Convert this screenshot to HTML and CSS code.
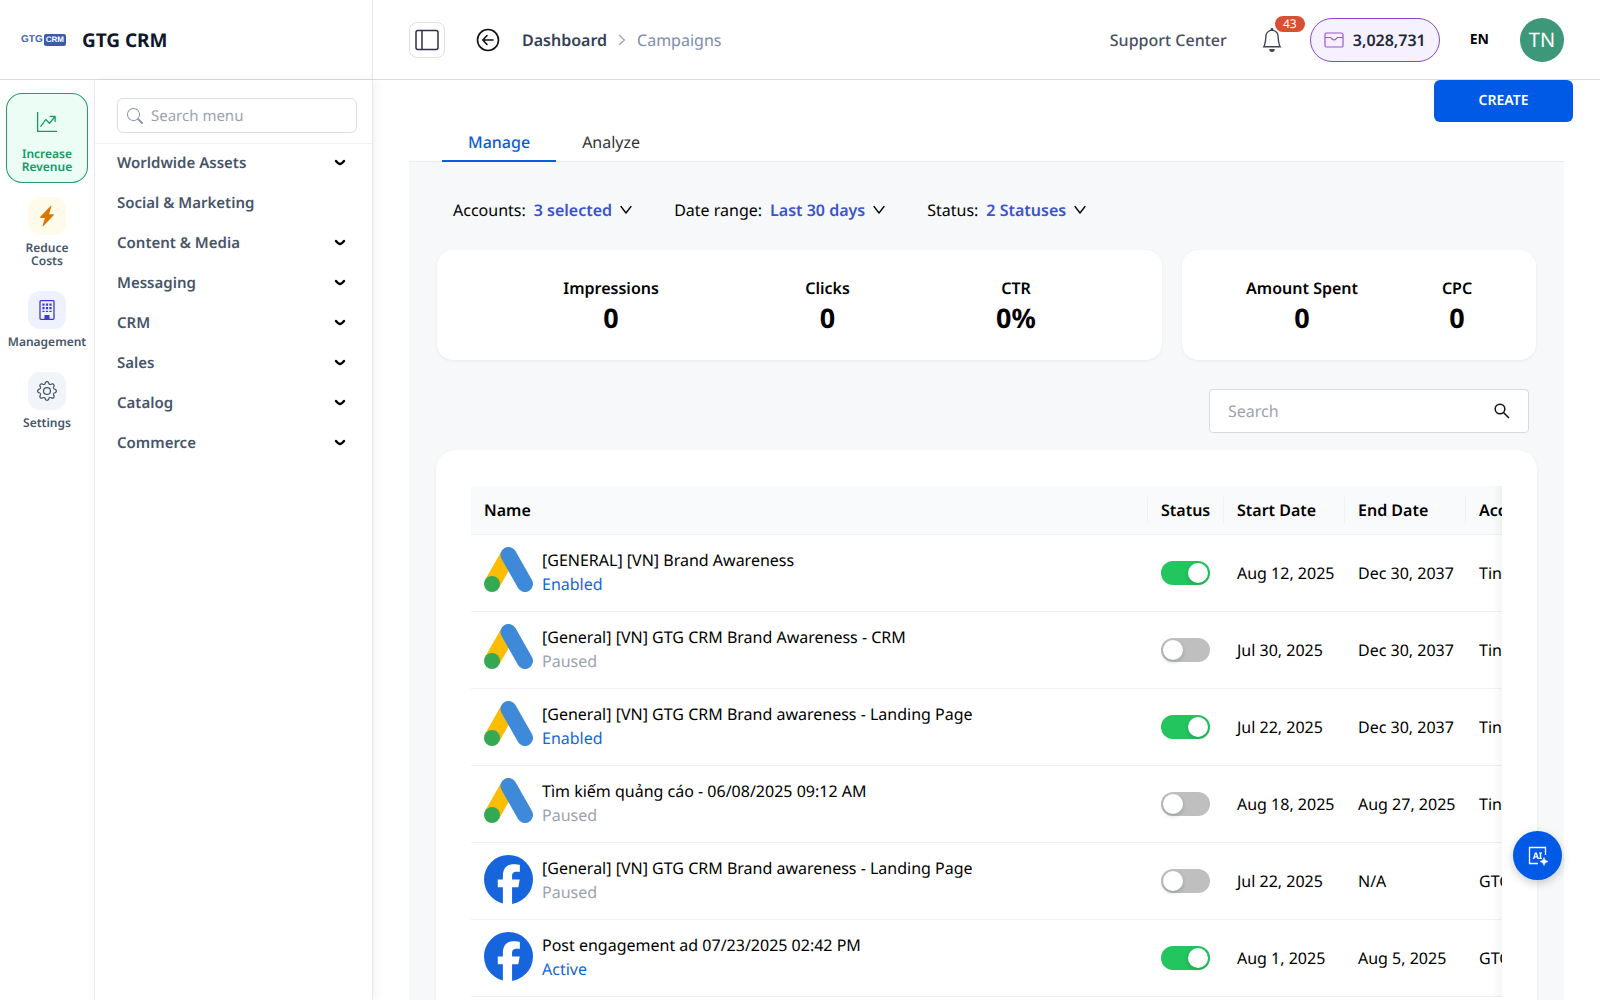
FILE: index.html
```html
<!DOCTYPE html>
<html lang="en">
<head>
	<meta charset="UTF-8">
	<meta name="viewport" content="width=device-width, initial-scale=1">
	<title>Campaigns - GTG CRM</title>
	<link rel="stylesheet" href="styles.css">
</head>
<body>

<!-- shared icons -->
<svg class="sprite" aria-hidden="true">
	<symbol id="chevron" viewBox="0 0 12 12"><path d="M1 2.5 6 9l5-6.500" fill="none" stroke="currentColor" stroke-width="1.3" stroke-linecap="round" stroke-linejoin="round"/></symbol>
	<symbol id="caret" viewBox="0 0 12 8"><path d="M2 2q2.500 3 4 3t4-3" fill="none" stroke="currentColor" stroke-width="2.400" stroke-linecap="round"/></symbol>
	<symbol id="ads" viewBox="0 0 49 45">
		<path d="M24.500 8 8 37" stroke="#fbbc04" stroke-width="16"/>
		<path d="M24.500 8 41 37" stroke="#3f8ad8" stroke-width="16" stroke-linecap="round"/>
		<circle cx="8" cy="37" r="8" fill="#34a853"/>
	</symbol>
	<symbol id="facebook" viewBox="0 0 48 48">
		<circle cx="24" cy="24" r="24" fill="#1765dc"/>
		<path d="M18.500 48V31.500h-5V24h5v-3.200C18.500 13 22 9 29.800 9c1.500 0 4 .3 5.300.6v7c-.6-.1-1.800-.1-3-.1-3.600 0-4.600 1.500-4.600 4.800V24H35l-1.400 7.500h-6.100V48z" fill="#fff"/>
	</symbol>
</svg>

<div class="app">
	<header class="topbar">
		<div class="brand">
			<span class="logo" aria-hidden="true">GTG<b>CRM</b></span>
			<span class="brand-name">GTG CRM</span>
		</div>
		<div class="topbar-main">
			<button type="button" class="toggle" aria-label="Toggle sidebar">
				<svg width="24" height="22" viewBox="0 0 24 22" fill="none" stroke="#312e45" stroke-width="1.500"><rect x="1" y="1.500" width="22" height="19" rx="2"/><path d="M7 2v18"/></svg>
			</button>
			<button type="button" class="back" aria-label="Back">
				<svg width="24" height="24" viewBox="0 0 24 24" fill="none" stroke="#111" stroke-width="1.600" stroke-linecap="round" stroke-linejoin="round"><circle cx="12" cy="12" r="10.500"/><path d="M17 12H7m4-4.500L6.800 12l4.200 4.500"/></svg>
			</button>
			<nav class="crumbs" aria-label="Breadcrumb">
				<a href="#">Dashboard</a>
				<svg width="8" height="14" viewBox="0 0 8 14" fill="none" stroke="#94a3b8" stroke-width="1.200"><path d="m1 2 5.500 5L1 12"/></svg>
				<span>Campaigns</span>
			</nav>
			<a href="#" class="support">Support Center</a>
			<button type="button" class="bell" aria-label="Notifications">
				<svg width="22" height="24" viewBox="0 0 16 16" preserveAspectRatio="none" fill="#3f4652"><path d="M8 16a2 2 0 0 0 2-2H6a2 2 0 0 0 2 2M8 1.918l-.797.161A4 4 0 0 0 4 6c0 .628-.134 2.197-.459 3.742-.16.767-.376 1.566-.663 2.258h10.244c-.287-.692-.502-1.490-.663-2.258C12.134 8.197 12 6.628 12 6a4 4 0 0 0-3.203-3.920zM14.220 12c.223.447.481.801.780 1H1c.299-.199.557-.553.780-1C2.680 10.200 3 6.880 3 6c0-2.420 1.720-4.440 4.005-4.901a1 1 0 1 1 1.990 0A5 5 0 0 1 13 6c0 .880.320 4.200 1.220 6"/></svg>
				<span class="badge">43</span>
			</button>
			<button type="button" class="credits">
				<svg width="20" height="16" viewBox="0 0 20 16" fill="none" stroke="#9a55e0" stroke-width="1.200"><rect x="1" y="1" width="18" height="14" rx="1.500"/><path d="M1 5.500h5.500c.8 0 1.500 2.500 3.500 2.500s2.700-2.500 3.500-2.500H19"/></svg>
				3,028,731
			</button>
			<button type="button" class="lang">EN</button>
			<span class="avatar">TN</span>
		</div>
	</header>

	<div class="body">
		<nav class="rail" aria-label="Sections">
			<a href="#" class="rail-item active">
				<span class="rail-icon"><svg width="20" height="20" viewBox="0 0 16 16" fill="currentColor"><path d="M0 0h1v15h15v1H0zm10 3.500a.5.5 0 0 1 .5-.5h4a.5.5 0 0 1 .5.5v4a.5.5 0 0 1-1 0V4.900l-3.613 4.417a.5.5 0 0 1-.74.037L7.060 6.767l-3.656 5.027a.5.5 0 0 1-.808-.588l4-5.500a.5.5 0 0 1 .758-.060l2.609 2.610L13.445 4H10.500a.5.5 0 0 1-.5-.5"/></svg></span>
				<span>Increase<br>Revenue</span>
			</a>
			<a href="#" class="rail-item">
				<span class="rail-icon costs"><svg width="20" height="20" viewBox="0 0 16 16" fill="currentColor"><path d="M11.251.068a.5.5 0 0 1 .227.580L9.677 6.500H13a.5.5 0 0 1 .364.843l-8 8.500a.5.5 0 0 1-.842-.490L6.323 9.500H3a.5.5 0 0 1-.364-.843l8-8.500a.5.5 0 0 1 .615-.090z"/></svg></span>
				<span>Reduce<br>Costs</span>
			</a>
			<a href="#" class="rail-item">
				<span class="rail-icon management"><svg width="20" height="20" viewBox="0 0 20 20"><rect x="3" y=".7" width="14" height="18.600" rx="1" fill="none" stroke="currentColor" stroke-width="1.300"/><path d="M6.500 3.500v8.500M10 3.500v8.500M13.500 3.500v8.500" stroke="currentColor" stroke-width="2.200" stroke-dasharray="2.200 1.400"/><path d="M7.500 15h5v4h-5z" fill="currentColor"/></svg></span>
				<span>Management</span>
			</a>
			<a href="#" class="rail-item">
				<span class="rail-icon settings"><svg width="20" height="20" viewBox="0 0 16 16" fill="currentColor"><path d="M8 4.754a3.246 3.246 0 1 0 0 6.492 3.246 3.246 0 0 0 0-6.492M5.754 8a2.246 2.246 0 1 1 4.492 0 2.246 2.246 0 0 1-4.492 0"/><path d="M9.796 1.343c-.527-1.790-3.065-1.790-3.592 0l-.094.319a.873.873 0 0 1-1.255.520l-.292-.160c-1.640-.892-3.433.902-2.540 2.541l.159.292a.873.873 0 0 1-.520 1.255l-.319.094c-1.790.527-1.790 3.065 0 3.592l.319.094a.873.873 0 0 1 .520 1.255l-.160.292c-.892 1.640.901 3.434 2.541 2.540l.292-.159a.873.873 0 0 1 1.255.520l.094.319c.527 1.790 3.065 1.790 3.592 0l.094-.319a.873.873 0 0 1 1.255-.520l.292.160c1.640.893 3.434-.902 2.540-2.541l-.159-.292a.873.873 0 0 1 .520-1.255l.319-.094c1.790-.527 1.790-3.065 0-3.592l-.319-.094a.873.873 0 0 1-.520-1.255l.160-.292c.893-1.640-.902-3.433-2.541-2.540l-.292.159a.873.873 0 0 1-1.255-.520zm-2.633.283c.246-.835 1.428-.835 1.674 0l.094.319a1.873 1.873 0 0 0 2.693 1.115l.291-.160c.764-.415 1.600.420 1.184 1.185l-.159.292a1.873 1.873 0 0 0 1.116 2.692l.318.094c.835.246.835 1.428 0 1.674l-.319.094a1.873 1.873 0 0 0-1.115 2.693l.160.291c.415.764-.420 1.600-1.185 1.184l-.291-.159a1.873 1.873 0 0 0-2.693 1.116l-.094.318c-.246.835-1.428.835-1.674 0l-.094-.319a1.873 1.873 0 0 0-2.692-1.115l-.292.160c-.764.415-1.600-.420-1.184-1.185l.159-.291A1.873 1.873 0 0 0 1.945 8.930l-.319-.094c-.835-.246-.835-1.428 0-1.674l.319-.094A1.873 1.873 0 0 0 3.060 4.377l-.160-.292c-.415-.764.420-1.600 1.185-1.184l.292.159a1.873 1.873 0 0 0 2.692-1.115z"/></svg></span>
				<span>Settings</span>
			</a>
		</nav>

		<aside class="menu">
			<div class="menu-search">
				<label class="menu-field">
					<svg width="16" height="16" viewBox="0 0 16 16" fill="#8f96a3"><path d="M11.742 10.344a6.500 6.500 0 1 0-1.397 1.398h-.001q.044.060.098.115l3.850 3.850a1 1 0 0 0 1.415-1.414l-3.850-3.850a1 1 0 0 0-.115-.1zM12 6.500a5.500 5.500 0 1 1-11 0 5.500 5.500 0 0 1 11 0"/></svg>
					<input type="text" placeholder="Search menu" aria-label="Search menu">
				</label>
			</div>
			<ul class="menu-list">
				<li><a href="#">Worldwide Assets <svg width="12" height="8"><use href="#caret"/></svg></a></li>
				<li><a href="#">Social &amp; Marketing</a></li>
				<li><a href="#">Content &amp; Media <svg width="12" height="8"><use href="#caret"/></svg></a></li>
				<li><a href="#">Messaging <svg width="12" height="8"><use href="#caret"/></svg></a></li>
				<li><a href="#">CRM <svg width="12" height="8"><use href="#caret"/></svg></a></li>
				<li><a href="#">Sales <svg width="12" height="8"><use href="#caret"/></svg></a></li>
				<li><a href="#">Catalog <svg width="12" height="8"><use href="#caret"/></svg></a></li>
				<li><a href="#">Commerce <svg width="12" height="8"><use href="#caret"/></svg></a></li>
			</ul>
		</aside>

		<main class="main">
			<div class="actions">
				<button type="button" class="create">CREATE</button>
			</div>
			<div class="tabs" role="tablist">
				<button type="button" class="tab active" role="tab" aria-selected="true">Manage</button>
				<button type="button" class="tab" role="tab" aria-selected="false">Analyze</button>
			</div>

			<section class="panel">
				<div class="filters">
					<button type="button" class="filter">Accounts: <b>3 selected</b> <svg width="12" height="12"><use href="#chevron"/></svg></button>
					<button type="button" class="filter">Date range: <b>Last 30 days</b> <svg width="12" height="12"><use href="#chevron"/></svg></button>
					<button type="button" class="filter">Status: <b>2 Statuses</b> <svg width="12" height="12"><use href="#chevron"/></svg></button>
				</div>

				<div class="stats">
					<dl class="stat-card">
						<div><dt>Impressions</dt><dd>0</dd></div>
						<div><dt>Clicks</dt><dd>0</dd></div>
						<div><dt>CTR</dt><dd>0%</dd></div>
					</dl>
					<dl class="stat-card">
						<div><dt>Amount Spent</dt><dd>0</dd></div>
						<div><dt>CPC</dt><dd>0</dd></div>
					</dl>
				</div>

				<label class="search">
					<input type="text" placeholder="Search" aria-label="Search campaigns">
					<svg width="16" height="16" viewBox="0 0 16 16" fill="none" stroke="#111" stroke-width="1.500"><circle cx="6" cy="6" r="4.800"/><path d="m9.500 9.500 5.500 5.500"/></svg>
				</label>

				<div class="table-card">
					<div class="table-wrap">
						<div class="table-scroll">
							<table>
								<colgroup>
									<col class="col-name">
									<col class="col-status">
									<col class="col-date">
									<col class="col-date">
									<col class="col-account">
								</colgroup>
								<thead>
									<tr><th>Name</th><th>Status</th><th>Start Date</th><th>End Date</th><th>Account</th></tr>
								</thead>
								<tbody>
									<tr>
										<td><div class="campaign"><svg width="49" height="45"><use href="#ads"/></svg><p>[GENERAL] [VN] Brand Awareness<span class="on">Enabled</span></p></div></td>
										<td><input type="checkbox" class="switch" aria-label="Campaign status" checked></td>
										<td>Aug 12, 2025</td>
										<td>Dec 30, 2037</td>
										<td>Tin</td>
									</tr>
									<tr>
										<td><div class="campaign"><svg width="49" height="45"><use href="#ads"/></svg><p>[General] [VN] GTG CRM Brand Awareness - CRM<span>Paused</span></p></div></td>
										<td><input type="checkbox" class="switch" aria-label="Campaign status"></td>
										<td>Jul 30, 2025</td>
										<td>Dec 30, 2037</td>
										<td>Tin</td>
									</tr>
									<tr>
										<td><div class="campaign"><svg width="49" height="45"><use href="#ads"/></svg><p>[General] [VN] GTG CRM Brand awareness - Landing Page<span class="on">Enabled</span></p></div></td>
										<td><input type="checkbox" class="switch" aria-label="Campaign status" checked></td>
										<td>Jul 22, 2025</td>
										<td>Dec 30, 2037</td>
										<td>Tin</td>
									</tr>
									<tr>
										<td><div class="campaign"><svg width="49" height="45"><use href="#ads"/></svg><p>Tìm kiếm quảng cáo - 06/08/2025 09:12 AM<span>Paused</span></p></div></td>
										<td><input type="checkbox" class="switch" aria-label="Campaign status"></td>
										<td>Aug 18, 2025</td>
										<td>Aug 27, 2025</td>
										<td>Tin</td>
									</tr>
									<tr>
										<td><div class="campaign"><svg width="49" height="49"><use href="#facebook"/></svg><p>[General] [VN] GTG CRM Brand awareness - Landing Page<span>Paused</span></p></div></td>
										<td><input type="checkbox" class="switch" aria-label="Campaign status"></td>
										<td>Jul 22, 2025</td>
										<td>N/A</td>
										<td>GTG</td>
									</tr>
									<tr>
										<td><div class="campaign"><svg width="49" height="49"><use href="#facebook"/></svg><p>Post engagement ad 07/23/2025 02:42 PM<span class="on">Active</span></p></div></td>
										<td><input type="checkbox" class="switch" aria-label="Campaign status" checked></td>
										<td>Aug 1, 2025</td>
										<td>Aug 5, 2025</td>
										<td>GTG</td>
									</tr>
								</tbody>
							</table>
						</div>
					</div>
				</div>
			</section>
		</main>
	</div>
</div>

<button type="button" class="assistant" aria-label="AI assistant">
	<svg width="22" height="22" viewBox="0 0 22 22" fill="none" stroke="#fff" stroke-width="1.300">
		<path d="M18.500 10V2.500H2.500V18.500H11"/>
		<text x="10.500" y="13.500" class="assistant-text">AI</text>
		<path d="M17 12.500q.5 3.500 4 4-3.500.5-4 4-.5-3.500-4-4 3.500-.5 4-4z" fill="#fff" stroke-width=".6"/>
	</svg>
</button>

</body>
</html>
```
FILE: styles.css
```css
*{
	box-sizing: border-box;
	margin: 0;
	padding: 0;
}
body{
	font-family: "Noto Sans", sans-serif;
	font-size: 16px;
	line-height: 24px;
	color: #000;
	background: #fff;
	text-rendering: geometricPrecision;
}
button, input{
	font: inherit;
	color: inherit;
	border: 0;
	background: none;
	text-rendering: inherit;
}
button{
	cursor: pointer;
}
a{
	color: inherit;
	text-decoration: none;
}
ul{
	list-style: none;
}
svg{
	display: block;
	flex: none;
}
.sprite{
	position: absolute;
	width: 0;
	height: 0;
}
.app{
	display: flex;
	flex-direction: column;
	height: 100vh;
	overflow: hidden;
}

/* top bar */
.topbar{
	display: flex;
	flex: none;
	height: 80px;
	border-bottom: 1px solid #d9dcdf;
}
.brand{
	display: flex;
	align-items: center;
	gap: 16px;
	width: 373px;
	padding-left: 21px;
	border-right: 1px solid #e5e7eb;
}
.logo{
	display: flex;
	align-items: center;
	gap: 1px;
	font: bold 10px/12px "Liberation Sans", sans-serif;
	color: #4a63ae;
}
.logo b{
	padding: 0 2px;
	border-radius: 2px;
	font-size: 8px;
	color: #fff;
	background: #3d5ca8;
}
.brand-name{
	font-size: 19px;
	font-weight: 700;
	color: #0f172a;
}
.topbar-main{
	display: flex;
	flex: 1;
	align-items: center;
	padding: 0 36px;
}
.toggle{
	display: flex;
	align-items: center;
	justify-content: center;
	width: 36px;
	height: 36px;
	margin-right: 31px;
	border: 1px solid #dfe1ea;
	border-radius: 8px;
}
.back{
	margin-right: 22px;
}
.crumbs{
	display: flex;
	align-items: center;
	gap: 11px;
	margin-right: auto;
	color: #7c8bab;
}
.crumbs a{
	font-weight: 600;
	color: #334155;
}
.support{
	margin-right: 34px;
	font-weight: 500;
	color: #475060;
}
.bell{
	position: relative;
	margin-right: 27px;
}
.badge{
	position: absolute;
	top: -12px;
	left: 14px;
	width: 30px;
	border-radius: 8px;
	font-size: 12px;
	line-height: 16px;
	text-align: center;
	color: #fff;
	background: #d94f33;
}
.credits{
	display: flex;
	align-items: center;
	gap: 9px;
	height: 44px;
	margin-right: 30px;
	padding: 0 13px;
	border: 1px solid #8b45d6;
	border-radius: 22px;
	font-weight: 600;
	color: #1f2937;
	background: #f5f1ff;
}
.lang{
	margin-right: 31px;
	font-size: 14px;
	font-weight: 700;
}
.avatar{
	width: 44px;
	border-radius: 50%;
	font-size: 20px;
	line-height: 44px;
	text-align: center;
	color: #fff;
	background: #3d9779;
}

/* left rail */
.body{
	display: flex;
	flex: 1;
	min-height: 0;
}
.rail{
	display: flex;
	flex: none;
	flex-direction: column;
	gap: 4px;
	width: 95px;
	padding: 13px 6px;
	border-right: 1px solid #eceef0;
}
.rail-item{
	display: flex;
	flex-direction: column;
	align-items: center;
	gap: 6px;
	width: 82px;
	padding: 10px 0;
	border-radius: 16px;
	font-size: 12px;
	font-weight: 600;
	line-height: 13px;
	text-align: center;
	color: #475569;
}
.rail-item.active{
	color: #119a63;
	background: #ecfdf5;
	box-shadow: inset 0 0 0 1px #239a70;
}
.rail-icon{
	display: flex;
	align-items: center;
	justify-content: center;
	width: 38px;
	height: 38px;
	border-radius: 12px;
}
.costs{
	color: #d97706;
	background: #fffbeb;
}
.management{
	color: #4338ca;
	background: #eef2ff;
}
.settings{
	color: #475569;
	background: #f1f5f9;
}

/* menu */
.menu{
	flex: none;
	width: 278px;
	border-right: 1px solid #e5e7eb;
	box-shadow: 2px 0 10px rgba(0, 0, 0, .06);
}
.menu-search{
	padding: 18px 15px 10px 22px;
	border-bottom: 1px solid #f1f2f4;
}
.menu-field{
	display: flex;
	align-items: center;
	gap: 8px;
	height: 35px;
	padding: 0 9px;
	border: 1px solid #dcdee3;
	border-radius: 6px;
	font-size: 15px;
}
.menu-field input{
	width: 100%;
	outline: none;
}
::placeholder{
	color: #9ca3af;
	opacity: 1;
}
.menu-list a{
	display: flex;
	align-items: center;
	justify-content: space-between;
	height: 40px;
	padding: 0 26px 2px 22px;
	font-size: 15px;
	font-weight: 600;
	color: #475569;
}
.menu-list svg{
	color: #000;
}

/* page */
.main{
	flex: 1;
	min-width: 0;
	padding: 0 36px;
	overflow-y: auto;
	scrollbar-width: none;
}
.actions{
	display: flex;
	justify-content: flex-end;
	margin-right: -9px;
}
.create{
	width: 139px;
	height: 42px;
	border-radius: 6px;
	font-size: 14px;
	font-weight: 600;
	color: #fff;
	background: #005ae6;
}
.tabs{
	display: flex;
	padding-left: 33px;
	border-bottom: 1px solid #e8ebee;
}
.tab{
	height: 40px;
	margin-bottom: -1px;
	padding: 1px 26px 0;
	border-bottom: 2px solid transparent;
	color: #333;
}
.tab.active{
	font-weight: 500;
	color: #0b5cd8;
	border-color: #0b5cd8;
}
.panel{
	min-height: 100%;
	padding: 36px 28px 28px;
	background: #f6f8fa;
}
.filters{
	display: flex;
	gap: 42px;
	padding-left: 16px;
	margin-bottom: 28px;
}
.filter{
	display: flex;
	align-items: center;
	gap: 8px;
}
.filter b{
	font-weight: 600;
	color: #3a55cc;
}
.stats{
	display: grid;
	grid-template-columns: 2.05fr 1fr;
	gap: 20px;
}
.stat-card{
	display: flex;
	justify-content: space-evenly;
	gap: 20px;
	padding: 25px 0;
	border-radius: 16px;
	text-align: center;
	background: #fff;
	box-shadow: 0 1px 3px rgba(0, 0, 0, .07);
}
.stat-card dt{
	font-weight: 600;
	line-height: 26px;
}
.stat-card dd{
	font-size: 27px;
	font-weight: 700;
	line-height: 34px;
}
.search{
	display: flex;
	align-items: center;
	width: 320px;
	height: 44px;
	margin: 29px 7px 17px auto;
	padding: 0 18px;
	border: 1px solid #d8dbde;
	border-radius: 4px;
	background: #fff;
}
.search input{
	flex: 1;
	min-width: 0;
	outline: none;
}

/* campaigns table */
.table-card{
	margin: 0 -1px;
	padding: 36px 35px;
	border-radius: 20px;
	background: #fff;
	box-shadow: 0 2px 4px rgba(0, 0, 0, .06);
}
.table-wrap{
	position: relative;
}
/* fade that shows there are more columns */
.table-wrap::after{
	content: "";
	position: absolute;
	top: 0;
	right: 0;
	bottom: 0;
	width: 10px;
	background: linear-gradient(to right, transparent, rgba(0, 0, 0, .04));
}
.table-scroll{
	overflow-x: auto;
}
table{
	width: 1216px;
	table-layout: fixed;
	border-collapse: separate;
	border-spacing: 0;
	text-align: left;
}
.col-name{
	width: 677px;
}
.col-status{
	width: 76px;
}
.col-date{
	width: 121px;
}
th, td{
	padding: 0 13px;
	border-bottom: 1px solid #eff0f2;
	white-space: nowrap;
}
th{
	height: 49px;
	font-weight: 600;
	background: #f9fafb;
}
th:not(:last-child){
	background: linear-gradient(#eef0f2, #eef0f2) right center / 1px 26px no-repeat #f9fafb;
}
td{
	height: 77px;
}
.campaign{
	display: flex;
	gap: 9px;
	height: 52px;
}
.campaign p{
	padding-top: 1px;
}
.campaign span{
	display: block;
	color: #9ca3af;
}
.campaign .on{
	color: #1565d8;
}
.switch{
	display: block;
	position: relative;
	width: 49px;
	height: 24px;
	border-radius: 12px;
	appearance: none;
	background: #bfbfbf;
	cursor: pointer;
}
.switch::before{
	content: "";
	position: absolute;
	top: 2px;
	left: 2px;
	width: 20px;
	height: 20px;
	border-radius: 50%;
	background: #fff;
	box-shadow: 0 2px 4px rgba(0, 35, 11, .2);
}
.switch:checked{
	background: #22c55e;
}
.switch:checked::before{
	left: 27px;
}

/* floating button */
.assistant{
	position: fixed;
	right: 38px;
	bottom: 120px;
	display: flex;
	align-items: center;
	justify-content: center;
	width: 49px;
	height: 49px;
	border-radius: 50%;
	background: #005ae6;
	box-shadow: 0 3px 10px rgba(0, 0, 0, .2);
}
.assistant-text{
	font-size: 9px;
	font-weight: 700;
	text-anchor: middle;
	fill: #fff;
	stroke: none;
}
```
